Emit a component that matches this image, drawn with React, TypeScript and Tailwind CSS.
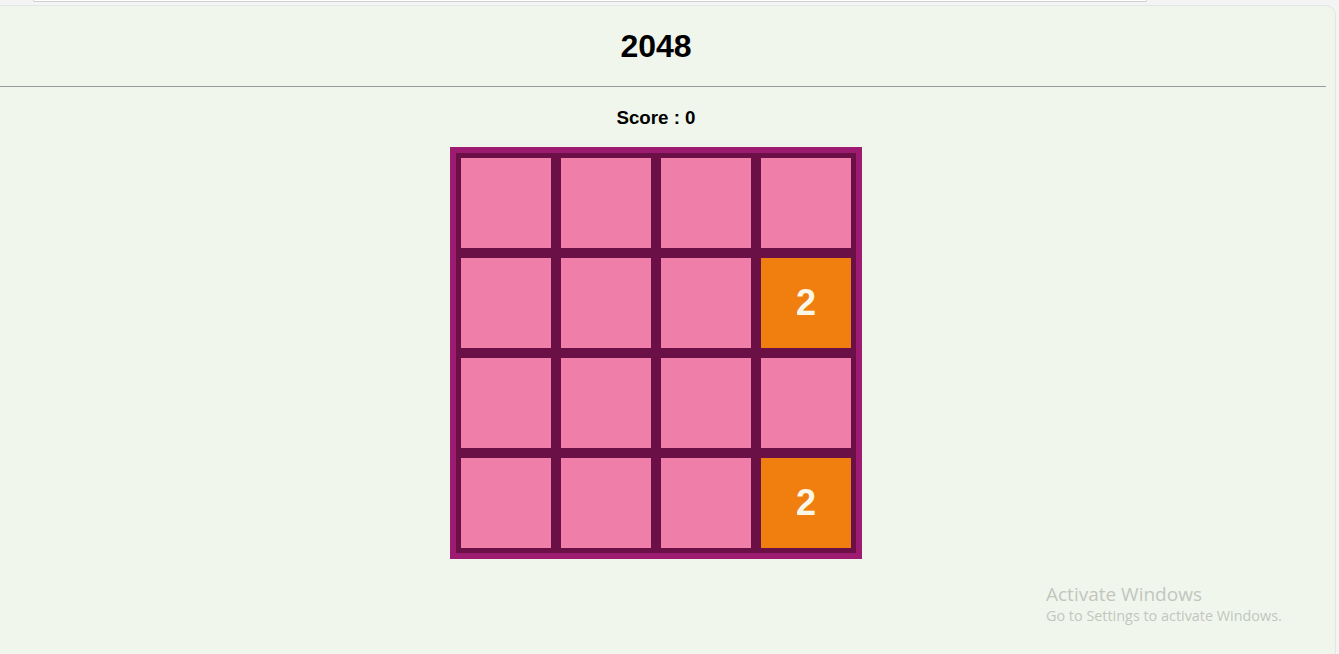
import React from "react";

const board: (number | null)[][] = [
  [null, null, null, null],
  [null, null, null, 2],
  [null, null, null, null],
  [null, null, null, 2],
];

function Tile({ value }: { value: number | null }) {
  return (
    <div
      className={
        value
          ? "w-[90px] h-[90px] m-[5px] bg-[#f07f10] flex items-center justify-center text-[36px] font-bold text-[#fbf7e8]"
          : "w-[90px] h-[90px] m-[5px] bg-[#ef7fa8]"
      }
    >
      {value ?? ""}
    </div>
  );
}

export default function App() {
  const score = 0;

  return (
    <div
      className="relative w-full h-[654px] bg-[#f4f4f4] overflow-hidden"
      style={{ fontFamily: '"Liberation Sans", Arial, sans-serif' }}
    >
      {/* browser chrome strip */}
      <div className="h-[5px]">
        <div className="ml-[33px] w-[1114px] h-[2px] border-b border-x border-[#d0d0d0] rounded-b-[4px] bg-white" />
      </div>

      <div className="w-[1336px] h-[649px] bg-[#f1f6ec] border-t border-r border-[#e4e6e2] rounded-tr-[10px]">
        <div className="w-[1312px] h-[79px] flex items-center justify-center">
          <h1 className="text-[32px] font-bold text-black leading-none">2048</h1>
        </div>
        <div className="mt-px w-[1326px] h-px bg-[#9a9a9a]" />

        <div className="w-[1312px] flex flex-col items-center">
          <h3 className="mt-[21px] text-[18.72px] font-bold text-black leading-[20px]">
            Score : {score}
          </h3>
          <div className="mt-[19px] border-[6px] border-[#9e1b72] bg-[#6b1046]">
            {board.map((row, i) => (
              <div key={i} className="flex">
                {row.map((v, j) => (
                  <Tile key={j} value={v} />
                ))}
              </div>
            ))}
          </div>
        </div>
      </div>

      {/* windows watermark */}
      <div
        className="absolute left-[1046px] top-[581px] text-[#c2c6bf] leading-tight"
        style={{ fontFamily: '"Open Sans", "Noto Sans", sans-serif' }}
      >
        <div className="text-[19px] leading-[26px]">Activate Windows</div>
        <div className="text-[14.4px] leading-[18px]">Go to Settings to activate Windows.</div>
      </div>
    </div>
  );
}
